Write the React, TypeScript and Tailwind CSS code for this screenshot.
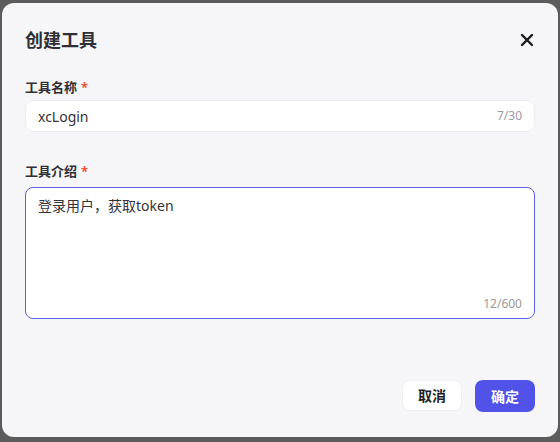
import React from "react";

export default function App() {
  const font = { fontFamily: '"Noto Sans", "Noto Sans CJK SC", sans-serif' };
  return (
    <div className="w-[560px] h-[442px] bg-[#5c5c5c] pl-[2px] pr-[2px] pt-[3px] pb-[5px]" style={font}>
      <div className="w-full h-full bg-[#f6f6f9] rounded-[12px] flex flex-col px-[23px] pt-[24px] pb-[25px]">
        <div className="flex items-center justify-between h-[26px]">
          <div className="text-[18px] font-bold text-[#2f2f36] leading-none">创建工具</div>
          <svg width="14" height="14" viewBox="0 0 14 14" className="mr-[1px]">
            <path d="M2 2 L12 12 M12 2 L2 12" stroke="#1b1b1f" strokeWidth="2.4" strokeLinecap="round" />
          </svg>
        </div>
        <div className="mt-[28px] text-[13px] font-bold text-[#2f2f36] leading-none flex items-center">
          工具名称<span className="text-[#f0523a] ml-[4px]">*</span>
        </div>
        <div className="mt-[6px] h-[32px] bg-white rounded-[8px] border border-[#ececf0] flex items-center justify-between px-[12px]">
          <span className="text-[14px] text-[#333338]">xcLogin</span>
          <span className="text-[12px] text-[#9a9aa2]">7/30</span>
        </div>
        <div className="mt-[33px] text-[13px] font-bold text-[#2f2f36] leading-none flex items-center">
          工具介绍<span className="text-[#f0523a] ml-[4px]">*</span>
        </div>
        <div className="mt-[9px] h-[132px] bg-white rounded-[8px] border border-[#5c5fe8] flex flex-col justify-between px-[12px] pt-[7px] pb-[8px]">
          <span className="text-[14px] text-[#333338]">登录用户，获取token</span>
          <span className="text-[12px] text-[#a0979a] self-end leading-none">12/600</span>
        </div>
        <div className="flex-1" />
        <div className="flex justify-end gap-[13px]">
          <button className="w-[60px] h-[31px] bg-white rounded-[8px] border border-[#efeff3] text-[14px] font-bold text-[#1f1f24]">取消</button>
          <button className="w-[60px] h-[32px] bg-[#5052e8] rounded-[8px] text-[14px] font-bold text-white">确定</button>
        </div>
      </div>
    </div>
  );
}
